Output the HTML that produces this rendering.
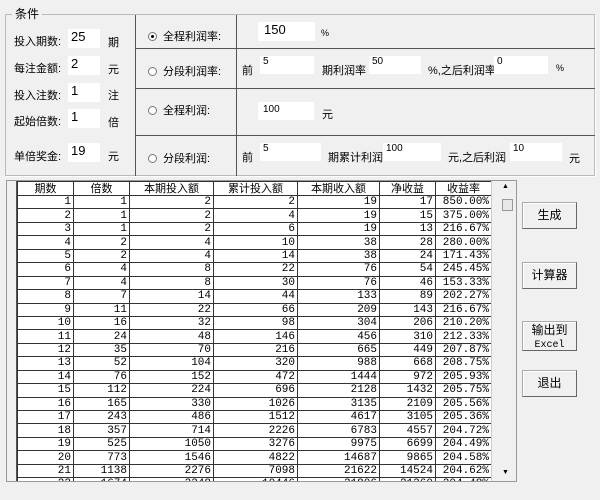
<!DOCTYPE html>
<html><head><meta charset="utf-8"><style>
*{box-sizing:border-box;margin:0;padding:0}
body{width:600px;height:500px;background:#f0f0f0;position:relative;overflow:hidden;font-family:"Liberation Sans","Noto Sans CJK SC",sans-serif;font-size:11px;color:#000}
.a{position:absolute;white-space:nowrap}
.in{position:absolute;background:#fff;font-size:13px;padding-left:3px;line-height:16px}
.in.s{font-size:10px;line-height:12px}
.hl{position:absolute;height:1px;background:#555}
.vl{position:absolute;width:1px;background:#555}
.btn{position:absolute;left:522px;width:55px;background:#f0f0f0;border:1px solid #aaa;border-right-color:#666;border-bottom-color:#666;box-shadow:inset 1px 1px #fff;text-align:center;font-size:12px}
.grid{position:absolute;left:6px;top:180px;width:511px;height:302px;background:#fff;border:1px solid #999;overflow:hidden}
table{border-collapse:collapse;position:absolute;left:10px;top:0;table-layout:fixed;font-family:"Liberation Mono","Noto Sans CJK SC",monospace;font-size:11px}
td{border:1px solid #333;height:13.45px;text-align:right;padding:0 2px;line-height:12px}
th{border:1px solid #333;height:14px;font-weight:normal;font-family:"Liberation Sans","Noto Sans CJK SC",sans-serif;font-size:11px;line-height:12px}
.rh{position:absolute;left:0;top:0;width:10px;height:100%;background:#f0f0f0;border-right:1px solid #555}
.sb{position:absolute;left:484px;top:0;width:27px;height:100%;background:#f0f0f0;border-left:1px solid #ccc}
.r{display:inline-block;width:9px;height:9px;border-radius:50%;border:1px solid #777;background:#fff;vertical-align:-1px;margin-right:6px;position:relative}
.r.on::after{content:"";position:absolute;left:2px;top:2px;width:3px;height:3px;border-radius:50%;background:#000}
</style></head><body>
<div class="a" style="left:5px;top:14px;width:590px;height:162px;border:1px solid #bbb;box-shadow:1px 1px #fff"></div>
<div class="a" style="left:12px;top:5px;background:#f0f0f0;padding:0 3px;font-size:12px">条件</div>
<div class="vl" style="left:135px;top:15px;height:161px"></div>
<div class="vl" style="left:236px;top:15px;height:161px"></div>
<div class="hl" style="left:135px;top:48px;width:460px"></div>
<div class="hl" style="left:135px;top:88px;width:460px"></div>
<div class="hl" style="left:135px;top:135px;width:460px"></div>

<div class="a" style="left:14px;top:33px">投入期数:</div><div class="in" style="left:68px;top:29px;width:32px;height:19px">25</div><div class="a" style="left:108px;top:34px">期</div>
<div class="a" style="left:14px;top:60px">每注金额:</div><div class="in" style="left:68px;top:56px;width:32px;height:19px">2</div><div class="a" style="left:108px;top:61px">元</div>
<div class="a" style="left:14px;top:87px">投入注数:</div><div class="in" style="left:68px;top:83px;width:32px;height:19px">1</div><div class="a" style="left:108px;top:87px">注</div>
<div class="a" style="left:14px;top:113px">起始倍数:</div><div class="in" style="left:68px;top:109px;width:32px;height:19px">1</div><div class="a" style="left:108px;top:114px">倍</div>
<div class="a" style="left:14px;top:148px">单倍奖金:</div><div class="in" style="left:68px;top:143px;width:32px;height:19px">19</div><div class="a" style="left:108px;top:148px">元</div>

<div class="a" style="left:148px;top:28px"><span class="r on"></span>全程利润率:</div>
<div class="a" style="left:148px;top:63px"><span class="r"></span>分段利润率:</div>
<div class="a" style="left:148px;top:102px"><span class="r"></span>全程利润:</div>
<div class="a" style="left:148px;top:150px"><span class="r"></span>分段利润:</div>

<div class="in" style="left:258px;top:22px;width:57px;height:19px;padding-left:6px">150</div><div class="a" style="left:321px;top:28px;font-size:9px">%</div>
<div class="a" style="left:242px;top:62px">前</div><div class="in s" style="left:260px;top:56px;width:54px;height:18px">5</div>
<div class="a" style="left:322px;top:62px">期利润率</div><div class="in s" style="left:369px;top:56px;width:52px;height:18px">50</div>
<div class="a" style="left:428px;top:62px">%,之后利润率</div><div class="in s" style="left:494px;top:56px;width:54px;height:18px">0</div><div class="a" style="left:556px;top:63px;font-size:9px">%</div>
<div class="in s" style="left:258px;top:102px;width:56px;height:18px;line-height:16px;padding-left:5px">100</div><div class="a" style="left:322px;top:106px">元</div>
<div class="a" style="left:242px;top:149px">前</div><div class="in s" style="left:260px;top:143px;width:61px;height:18px">5</div>
<div class="a" style="left:328px;top:149px">期累计利润</div><div class="in s" style="left:383px;top:143px;width:58px;height:18px">100</div>
<div class="a" style="left:448px;top:149px">元,之后利润</div><div class="in s" style="left:510px;top:143px;width:52px;height:18px">10</div><div class="a" style="left:569px;top:150px">元</div>

<div class="grid"><div class="rh"></div>
<table><colgroup><col style="width:56px"><col style="width:56px"><col style="width:84px"><col style="width:84px"><col style="width:82px"><col style="width:56px"><col style="width:56px"></colgroup>
<tr><th>期数</th><th>倍数</th><th>本期投入额</th><th>累计投入额</th><th>本期收入额</th><th>净收益</th><th>收益率</th></tr>
<tr><td>1</td><td>1</td><td>2</td><td>2</td><td>19</td><td>17</td><td>850.00%</td></tr>
<tr><td>2</td><td>1</td><td>2</td><td>4</td><td>19</td><td>15</td><td>375.00%</td></tr>
<tr><td>3</td><td>1</td><td>2</td><td>6</td><td>19</td><td>13</td><td>216.67%</td></tr>
<tr><td>4</td><td>2</td><td>4</td><td>10</td><td>38</td><td>28</td><td>280.00%</td></tr>
<tr><td>5</td><td>2</td><td>4</td><td>14</td><td>38</td><td>24</td><td>171.43%</td></tr>
<tr><td>6</td><td>4</td><td>8</td><td>22</td><td>76</td><td>54</td><td>245.45%</td></tr>
<tr><td>7</td><td>4</td><td>8</td><td>30</td><td>76</td><td>46</td><td>153.33%</td></tr>
<tr><td>8</td><td>7</td><td>14</td><td>44</td><td>133</td><td>89</td><td>202.27%</td></tr>
<tr><td>9</td><td>11</td><td>22</td><td>66</td><td>209</td><td>143</td><td>216.67%</td></tr>
<tr><td>10</td><td>16</td><td>32</td><td>98</td><td>304</td><td>206</td><td>210.20%</td></tr>
<tr><td>11</td><td>24</td><td>48</td><td>146</td><td>456</td><td>310</td><td>212.33%</td></tr>
<tr><td>12</td><td>35</td><td>70</td><td>216</td><td>665</td><td>449</td><td>207.87%</td></tr>
<tr><td>13</td><td>52</td><td>104</td><td>320</td><td>988</td><td>668</td><td>208.75%</td></tr>
<tr><td>14</td><td>76</td><td>152</td><td>472</td><td>1444</td><td>972</td><td>205.93%</td></tr>
<tr><td>15</td><td>112</td><td>224</td><td>696</td><td>2128</td><td>1432</td><td>205.75%</td></tr>
<tr><td>16</td><td>165</td><td>330</td><td>1026</td><td>3135</td><td>2109</td><td>205.56%</td></tr>
<tr><td>17</td><td>243</td><td>486</td><td>1512</td><td>4617</td><td>3105</td><td>205.36%</td></tr>
<tr><td>18</td><td>357</td><td>714</td><td>2226</td><td>6783</td><td>4557</td><td>204.72%</td></tr>
<tr><td>19</td><td>525</td><td>1050</td><td>3276</td><td>9975</td><td>6699</td><td>204.49%</td></tr>
<tr><td>20</td><td>773</td><td>1546</td><td>4822</td><td>14687</td><td>9865</td><td>204.58%</td></tr>
<tr><td>21</td><td>1138</td><td>2276</td><td>7098</td><td>21622</td><td>14524</td><td>204.62%</td></tr>
<tr><td>22</td><td>1674</td><td>3348</td><td>10446</td><td>31806</td><td>21360</td><td>204.48%</td></tr>
</table>
<div class="sb"><div class="a" style="left:10px;top:2px;font-size:7px">▲</div><div class="a" style="left:10px;top:18px;width:11px;height:12px;border:1px solid #999;background:#e8e8e8"></div><div class="a" style="left:10px;top:288px;font-size:7px">▼</div></div>
</div>

<div class="btn" style="top:202px;height:27px;line-height:25px">生成</div>
<div class="btn" style="top:262px;height:27px;line-height:25px">计算器</div>
<div class="btn" style="top:321px;height:30px;line-height:13px;padding-top:2px">输出到<br><span style="font-family:'Liberation Mono',monospace;font-size:10px">Excel</span></div>
<div class="btn" style="top:370px;height:27px;line-height:25px">退出</div>
</body></html>
